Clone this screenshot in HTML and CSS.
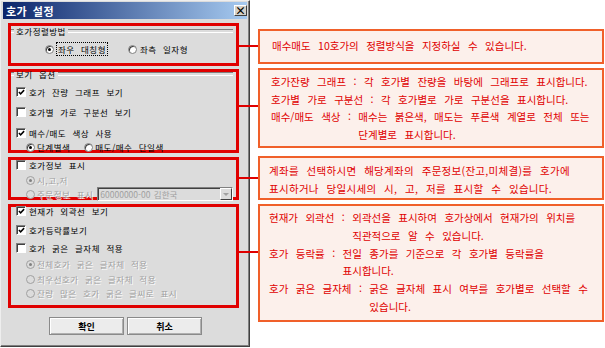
FILE: index.html
```html
<!DOCTYPE html>
<html lang="ko">
<head>
    <meta charset="UTF-8">
    <title>호가 설정</title>
    <link rel="stylesheet" href="styles.css">
</head>
<body>
    <div class="screen">
        <div class="dialog">
            <div class="titlebar">
                <span class="title">호가 설정</span>
                <span class="close">×</span>
            </div>

            <div class="body">
                <!-- 호가정렬방법 -->
                <div class="hl hl-sort">
                    <div class="legend"><span>호가정렬방법</span></div>
                    <div class="row row-sort">
                        <span class="opt"><span class="radio on"></span><span class="focus">좌우 대칭형</span></span>
                        <span class="opt opt-2"><span class="radio"></span>좌측 일자형</span>
                    </div>
                </div>

                <!-- 보기 옵션 -->
                <div class="hl hl-view">
                    <div class="legend legend-view"><span>보기 옵션</span></div>
                    <div class="row r-graph"><span class="check"><svg viewBox="0 0 8 8"><path d="M1 3.5l2 2 4-4.2"/></svg></span>호가 잔량 그래프 보기</div>
                    <div class="row r-line"><span class="check"></span>호가별 가로 구분선 보기</div>
                    <div class="row r-color"><span class="check"><svg viewBox="0 0 8 8"><path d="M1 3.5l2 2 4-4.2"/></svg></span>매수/매도 색상 사용</div>
                    <div class="row sub r-step">
                        <span class="opt"><span class="radio on"></span>단계별색</span>
                        <span class="opt opt-single"><span class="radio"></span>매도/매수 단일색</span>
                    </div>
                </div>

                <!-- 호가정보 표시 -->
                <div class="hl hl-info">
                    <div class="row r-info"><span class="check"></span>호가정보 표시</div>
                    <div class="row sub off r-hl"><span class="radio on"></span>시,고,저</div>
                    <div class="row sub off r-order">
                        <span class="radio"></span>주문정보 표시
                        <span class="combo">
                            <span class="combo-text">60000000-00 김한국</span>
                            <span class="drop"></span>
                        </span>
                    </div>
                </div>

                <!-- 현재가/등락률/굵은 글자체 -->
                <div class="hl hl-bold">
                    <div class="row r-cur"><span class="check"><svg viewBox="0 0 8 8"><path d="M1 3.5l2 2 4-4.2"/></svg></span>현재가 외곽선 보기</div>
                    <div class="row r-rate"><span class="check"><svg viewBox="0 0 8 8"><path d="M1 3.5l2 2 4-4.2"/></svg></span>호가등락률보기</div>
                    <div class="row r-bold"><span class="check"></span>호가 굵은 글자체 적용</div>
                    <div class="row sub off r-all"><span class="radio on"></span>전체호가 굵은 글자체 적용</div>
                    <div class="row sub off r-best"><span class="radio"></span>최우선호가 굵은 글자체 적용</div>
                    <div class="row sub off r-many"><span class="radio"></span>잔량 많은 호가 굵은 글씨로 표시</div>
                </div>

                <div class="buttons">
                    <button class="btn">확인</button>
                    <button class="btn">취소</button>
                </div>
            </div>
        </div>

        <div class="notes">
            <div class="note note-a">매수매도 10호가의 정렬방식을 지정하실 수 있습니다.</div>
            <div class="note note-b">
                <div class="item"><span class="term">호가잔량 그래프 : </span><span>각 호가별 잔량을 바탕에 그래프로 표시합니다.</span></div>
                <div class="item"><span class="term">호가별 가로 구분선 : </span><span>각 호가별로 가로 구분선을 표시합니다.</span></div>
                <div class="item"><span class="term">매수/매도 색상 : </span><span>매수는 붉은색, 매도는 푸른색 계열로 전체 또는<br>단계별로 표시합니다.</span></div>
            </div>
            <div class="note note-c">
                계좌를 선택하시면 해당계좌의 주문정보(잔고,미체결)를 호가에<br>
                표시하거나 당일시세의 시, 고, 저를 표시할 수 있습니다.
            </div>
            <div class="note note-d">
                <div class="item"><span class="term">현재가 외곽선 : </span><span>외곽선을 표시하여 호가상에서 현재가의 위치를<br>직관적으로 알 수 있습니다.</span></div>
                <div class="item"><span class="term">호가 등락률 : </span><span>전일 종가를 기준으로 각 호가별 등락률을<br>표시합니다.</span></div>
                <div class="item"><span class="term">호가 굵은 글자체 : </span><span>굵은 글자체 표시 여부를 호가별로 선택할 수<br>있습니다.</span></div>
            </div>
        </div>

        <!-- connector lines from highlight to note -->
        <span class="link link-a"></span>
        <span class="link link-b"></span>
        <span class="link link-c"></span>
        <span class="link link-d"></span>
    </div>
</body>
</html>
```

FILE: styles.css
```css
* {
    box-sizing: border-box;
}

body {
    margin: 0;
    background: #fff;
    font-family: "Noto Sans CJK KR", "Noto Sans", sans-serif;
}

.screen {
    position: relative;
    width: 605px;
    height: 348px;
    display: flex;
}

/* Dialog */
.dialog {
    width: 250px;
    height: 347px;
    background: #dcdcdc;
    border: 1px solid #eeeeee;
    border-right-color: #404040;
    border-bottom-color: #404040;
    box-shadow: inset -1px -1px 0 #808080;
    padding: 1px 2px;
    display: flex;
    flex-direction: column;
}

.titlebar {
    height: 17px;
    background: linear-gradient(to right, #0a246a, #a6caf0);
    display: flex;
    align-items: center;
    justify-content: space-between;
    padding: 0 0 0 3px;
}

.title {
    color: #fff;
    font-weight: bold;
    font-size: 11px;
    letter-spacing: 0.5px;
    word-spacing: 2px;
}

.close {
    width: 13px;
    height: 11px;
    background: #d4d0c8;
    border: 1px solid;
    border-color: #fff #404040 #404040 #fff;
    font-size: 11px;
    line-height: 8px;
    text-align: center;
    font-weight: bold;
    color: #000;
}

.body {
    padding: 4px 0 0 5px;
    font-size: 8.5px;
    color: #000;
}

/* red highlight frames */
.hl {
    width: 231px;
    border: 3px solid #e00000;
}

.hl-sort { height: 43px; }
.hl-view { height: 84px; margin-top: 3px; }
.hl-info { height: 43px; margin-top: 4px; }
.hl-bold { height: 104px; margin-top: 4px; }

.legend {
    display: flex;
    align-items: center;
    height: 12px;
    margin-top: -1px;
    gap: 2px;
    letter-spacing: 0.5px;
    word-spacing: 3.5px;
}

.legend::before,
.legend::after {
    content: "";
    height: 2px;
    border-top: 1px solid #808080;
    border-bottom: 1px solid #fff;
}

.legend::before { width: 3px; }
.legend::after { flex: 1; margin-right: 3px; }

.legend-view { margin-top: -4px; }

.row {
    display: flex;
    align-items: center;
    height: 12px;
    padding-left: 5px;
    gap: 3px;
    white-space: nowrap;
    letter-spacing: 0.5px;
    word-spacing: 3.5px;
}

.row.sub {
    padding-left: 15px;
    gap: 2px;
}

.row.off {
    color: #a0a0a0;
    text-shadow: 1px 1px 0 #fff;
}

.opt {
    display: flex;
    align-items: center;
    gap: 3px;
}

.row-sort { margin-top: 6px; padding-left: 34px; }
.row-sort .opt-2 { margin-left: 18px; }
.focus {
    outline: 1px dotted #000;
    padding: 0 1px;
    line-height: 12px;
}

.r-graph { margin-top: 6px; }
.r-line { margin-top: 8px; }
.r-color { margin-top: 9px; }
.r-step { margin-top: 2px; }
.r-step .opt { gap: 2px; }
.opt-single { margin-left: 12px; }

.r-info { margin-top: -1px; }
.r-hl { margin-top: 3px; }
.r-order { margin-top: 1px; height: 14px; }

.r-cur { margin-top: -2px; }
.r-rate { margin-top: 7px; }
.r-bold { margin-top: 6px; }
.r-all { margin-top: 4px; }
.r-best { margin-top: 3px; }
.r-many { margin-top: 2px; }

/* controls */
.check {
    width: 10px;
    height: 10px;
    flex: none;
    background: #fff;
    border: 1px solid;
    border-color: #808080 #fff #fff #808080;
    box-shadow: inset 1px 1px 0 #404040;
    display: flex;
    align-items: center;
    justify-content: center;
}

.check svg {
    width: 7px;
    height: 7px;
    margin: 1px 0 0 1px;
}

.check path {
    fill: none;
    stroke: #000;
    stroke-width: 1.7;
}

.radio {
    position: relative;
    width: 9px;
    height: 9px;
    flex: none;
    border-radius: 50%;
    background: #fff;
    border: 1px solid #808080;
    box-shadow: inset 1px 1px 0 #404040;
}

.radio.on::after {
    content: "";
    position: absolute;
    left: 2px;
    top: 2px;
    width: 3px;
    height: 3px;
    border-radius: 50%;
    background: #000;
}

.off .radio {
    background: #dcdcdc;
    border-color: #a0a0a0;
    box-shadow: none;
}

.off .radio.on::after {
    background: #808080;
}

.combo {
    margin-left: 2px;
    width: 136px;
    height: 14px;
    display: flex;
    align-items: center;
    background: #dcdcdc;
    border: 1px solid;
    border-color: #808080 #fff #fff #808080;
    box-shadow: inset 1px 1px 0 #404040;
    text-shadow: none;
    color: #a0a0a0;
    letter-spacing: 0;
    word-spacing: 1px;
}

.combo-text {
    flex: 1;
    padding-left: 2px;
}

.drop {
    position: relative;
    width: 12px;
    height: 12px;
    background: #dcdcdc;
    border: 1px solid;
    border-color: #fff #404040 #404040 #fff;
}

.drop::after {
    content: "";
    position: absolute;
    left: 2px;
    top: 4px;
    border: 3px solid transparent;
    border-top: 3px solid #a0a0a0;
}

.buttons {
    display: flex;
    gap: 3px;
    margin-top: 9px;
    padding-left: 41px;
}

.btn {
    width: 75px;
    height: 18px;
    padding: 0;
    background: #ececec;
    border: 1px solid #8a8a8a;
    box-shadow: inset 1px 1px 0 #fff, inset -1px -1px 0 #b0b0b0;
    font-family: inherit;
    font-size: 9px;
    font-weight: bold;
    color: #000;
}

/* callout notes */
.notes {
    margin-left: 8px;
    width: 346px;
    padding-top: 29px;
    display: flex;
    flex-direction: column;
}

.note {
    border: 2px solid #f0602a;
    background: #fcf0eb;
    color: #e00000;
    font-size: 10.5px;
    line-height: 18px;
    word-spacing: 4.5px;
    white-space: nowrap;
}

.note-a { height: 35px; padding: 6px 0 0 12px; }
.note-b { height: 80px; margin-top: 4px; padding: 3px 0 0 11px; line-height: 17.6px; }
.note-c { height: 44px; margin-top: 8px; padding: 4px 0 0 9px; letter-spacing: 0.3px; }
.note-d { height: 118px; margin-top: 4px; padding: 3px 0 0 9px; line-height: 17.8px; }

.item {
    display: flex;
}

.term {
    white-space: pre;
}

.link {
    position: absolute;
    left: 239px;
    width: 19px;
    height: 2px;
    background: #e00000;
}

.link-a { top: 45px; }
.link-b { top: 105px; }
.link-c { top: 177px; }
.link-d { top: 251px; }
```
